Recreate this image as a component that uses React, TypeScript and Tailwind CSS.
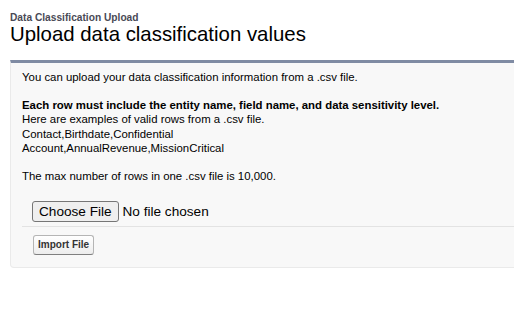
export default function App() {
  return (
    <div className="min-h-[311px] w-[514px] overflow-hidden bg-white pl-[10px] pt-[12px] font-['Liberation_Sans',Arial,sans-serif] text-[#000]">
      <div className="text-[10.2px] font-bold leading-[11px] text-[#4a4a56]">Data Classification Upload</div>
      <h1 className="text-[20.4px] leading-[22px] text-black">Upload data classification values</h1>

      <div className="mt-[15px] w-[520px] rounded-b-[4px] border border-t-[3px] border-[#eaeaea] border-t-[#7f8ba3] bg-[#f8f8f8]">
        <div className="px-[11px] pt-[7px] text-[11.4px] leading-[14.5px]">
          <p>You can upload your data classification information from a .csv file.</p>
          <p className="mt-[13px] font-bold">Each row must include the entity name, field name, and data sensitivity level.</p>
          <p>Here are examples of valid rows from a .csv file.</p>
          <p>Contact,Birthdate,Confidential</p>
          <p>Account,AnnualRevenue,MissionCritical</p>
          <p className="mt-[13px]">The max number of rows in one .csv file is 10,000.</p>

          <div className="mt-[18px] flex items-center pb-[4px] pl-[10px]">
            <button className="h-[21px] rounded-[3px] border border-[#767676] bg-[#efefef] px-[6px] text-[13.6px] leading-[18px] text-black">
              Choose File
            </button>
            <span className="ml-[4px] text-[13.6px] leading-[18px]">No file chosen</span>
          </div>
        </div>
        <div className="ml-[11px] border-t border-[#e3e3e3] pb-[12px] pl-[11px] pt-[4px]">
          <button className="h-[20px] rounded-[3px] border border-[#b5b5b5] border-b-[#7f7f7f] bg-gradient-to-b from-white to-[#ededed] px-[4px] text-[10px] font-bold leading-[16px] text-[#333]">
            Import File
          </button>
        </div>
      </div>
    </div>
  );
}
